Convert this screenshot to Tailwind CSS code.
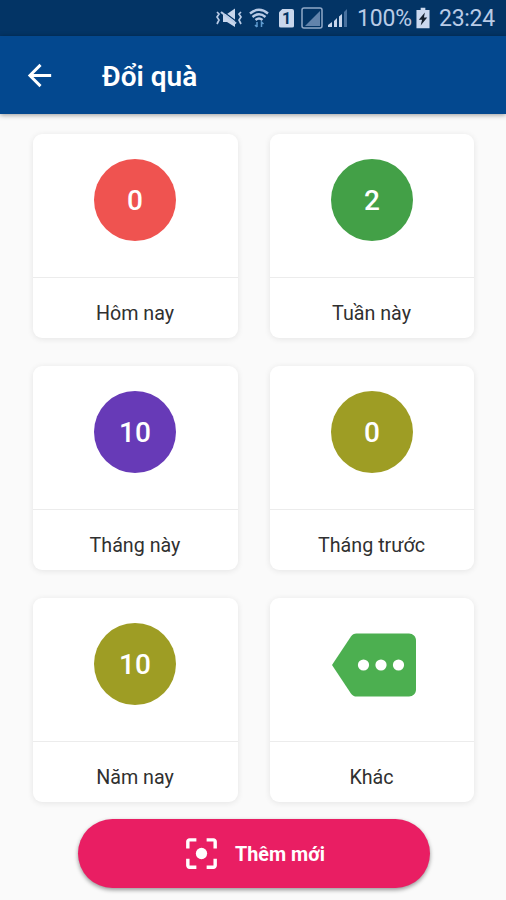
<!DOCTYPE html>
<html lang="vi">
<head>
<meta charset="utf-8">
<title>Đổi quà</title>
<script src="https://cdn.jsdelivr.net/npm/@tailwindcss/browser@4"></script>
</head>
<body class="flex h-[900px] w-[506px] flex-col overflow-hidden bg-[#fafafa] font-['Roboto',sans-serif]">
  <div class="flex h-9 shrink-0 items-center justify-end bg-[#033465] pr-3 text-[23px] text-[#b9cbe6]">
    <svg class="mr-1.5 h-5 w-7" viewBox="0 0 28 20" fill="none" stroke="#b9cbe6" stroke-width="1.700">
      <path d="M2 4l2 2-2 3 2 3-2 4M26 4l-2 2 2 3-2 3 2 4"/>
      <path d="M8 6h4l8-5.500v18.500l-8-5H8z" fill="#c8d6ec" stroke="none"/>
      <path d="M7.500 3l14 10.500" stroke="#033465" stroke-width="1.200"/>
      <path d="M6 4l15 11.500" stroke-width="2.200"/>
    </svg>
    <svg class="mr-2.5 h-5 w-5" viewBox="0 0 20 20" fill="none" stroke="#b9cbe6" stroke-width="2.400">
      <path d="M1 5.500Q10-2 19 5.500M3.500 9Q10 3.500 16.500 9M6.500 12Q10 9 13.500 12"/>
      <path d="M8 14v5M6 17l2 2M12.500 19v-5l2 2" stroke="#5f9bcf" stroke-width="1.500"/>
    </svg>
    <div class="mr-[7px] flex h-[19px] w-[15px] items-center justify-center rounded-[2px] bg-[#c8d6ec] pt-0.5 text-base font-bold text-[#033465] [clip-path:polygon(25%_0,100%_0,100%_100%,0_100%,0_20%)]">1</div>
    <svg class="mr-[5px] h-[22px] w-[22px]" viewBox="0 0 22 22">
      <path d="M4 19L19 4v15z" fill="#6283ab"/>
      <rect x="1" y="1" width="20" height="20" rx="2" fill="none" stroke="#91a9c8" stroke-width="1.500"/>
    </svg>
    <svg class="mr-[9px] h-5 w-5" viewBox="0 0 20 20" fill="#c8d6ec">
      <path d="M0 17l4-3v5H0zM6 13l3-3v9H6zM11 8.500l3-2.500V19h-3z"/>
      <path d="M16 4l3-3v18h-3z" fill="#48719f"/>
    </svg>
    <span class="mr-[5px] w-[54px] pt-0.5 tracking-[-0.2px] whitespace-nowrap">100%</span>
    <svg class="mr-[9px] h-[22px] w-[14px]" viewBox="0 0 15 22">
      <path d="M5 0h5v2.500h4.500V22H.5V2.500H5z" fill="#ccd9ef"/>
      <path d="M9.500 5L3 13h3.500L5 19l7-8.500H8.500z" fill="#14202e"/>
    </svg>
    <span class="w-[55px] pt-0.5 tracking-[-0.3px] whitespace-nowrap">23:24</span>
  </div>
  <header class="z-10 flex h-[78px] shrink-0 items-center bg-[#03488f] pl-[22px] text-white shadow-[0_1px_5px_rgba(0,0,0,0.4)]">
    <svg class="mr-[45px] h-[35px] w-[35px]" viewBox="0 0 24 24" fill="currentColor"><path d="M20 11H7.830l5.590-5.590L12 4l-8 8 8 8 1.410-1.410L7.830 13H20z"/></svg>
    <h1 class="pt-[3px] text-[28px] leading-8 font-semibold">Đổi quà</h1>
  </header>
  <main class="ml-[33px] mt-5 grid shrink-0 grid-cols-[205px_204px] grid-rows-[204px_204px_204px] gap-x-8 gap-y-7 text-[19.7px] text-[#303030]">
    <section class="flex flex-col rounded-[9px] bg-white shadow-[0_1px_6px_rgba(0,0,0,0.09)]">
      <div class="flex h-[144px] justify-center border-b border-[#ececec] pt-[24.5px] pr-px"><div class="flex size-[82px] items-center justify-center rounded-full bg-[#ef5350] pt-[3px] text-[28px] font-medium text-white">0</div></div>
      <p class="pt-[21px] pr-px text-center leading-[30px]">Hôm nay</p>
    </section>
    <section class="flex flex-col rounded-[9px] bg-white shadow-[0_1px_6px_rgba(0,0,0,0.09)]">
      <div class="flex h-[144px] justify-center border-b border-[#ececec] pt-[24.5px]"><div class="flex size-[82px] items-center justify-center rounded-full bg-[#43a047] pt-[3px] text-[28px] font-medium text-white">2</div></div>
      <p class="pt-[21px] pr-px text-center leading-[30px]">Tuần này</p>
    </section>
    <section class="flex flex-col rounded-[9px] bg-white shadow-[0_1px_6px_rgba(0,0,0,0.09)]">
      <div class="flex h-[144px] justify-center border-b border-[#ececec] pt-[24.5px] pr-px"><div class="flex size-[82px] items-center justify-center rounded-full bg-[#673ab7] pt-[3px] text-[28px] font-medium text-white">10</div></div>
      <p class="pt-[21px] pr-px text-center leading-[30px]">Tháng này</p>
    </section>
    <section class="flex flex-col rounded-[9px] bg-white shadow-[0_1px_6px_rgba(0,0,0,0.09)]">
      <div class="flex h-[144px] justify-center border-b border-[#ececec] pt-[24.5px]"><div class="flex size-[82px] items-center justify-center rounded-full bg-[#9e9d24] pt-[3px] text-[28px] font-medium text-white">0</div></div>
      <p class="pt-[21px] pr-px text-center leading-[30px]">Tháng trước</p>
    </section>
    <section class="flex flex-col rounded-[9px] bg-white shadow-[0_1px_6px_rgba(0,0,0,0.09)]">
      <div class="flex h-[144px] justify-center border-b border-[#ececec] pt-[24.5px] pr-px"><div class="flex size-[82px] items-center justify-center rounded-full bg-[#9e9d24] pt-[3px] text-[28px] font-medium text-white">10</div></div>
      <p class="pt-[21px] pr-px text-center leading-[30px]">Năm nay</p>
    </section>
    <section class="flex flex-col rounded-[9px] bg-white shadow-[0_1px_6px_rgba(0,0,0,0.09)]">
      <div class="flex h-[144px] justify-center border-b border-[#ececec] pt-[25px] pl-[3px]">
        <svg class="size-[84px]" viewBox="0 0 24 24"><path fill="#4caf50" d="M22 3H7c-.69 0-1.230.35-1.590.88L0 12l5.410 8.110c.36.53.97.89 1.660.89H22c1.100 0 2-.9 2-2V5c0-1.100-.9-2-2-2z"/><g fill="#fff"><circle cx="9" cy="12" r="1.600"/><circle cx="14" cy="12" r="1.600"/><circle cx="19" cy="12" r="1.600"/></g></svg>
      </div>
      <p class="pt-[21px] pr-px text-center leading-[30px]">Khác</p>
    </section>
  </main>
  <button class="ml-[78px] mt-[17px] flex h-[69px] w-[352px] shrink-0 items-center rounded-full bg-[#e91e63] pl-[103px] text-[19.8px] font-bold text-white shadow-[0_2px_4px_rgba(0,0,0,0.4)]">
    <svg class="mr-[13px] size-[41px]" viewBox="0 0 24 24" fill="currentColor"><circle cx="12" cy="12" r="3.300"/><path d="M5 15H3v4c0 1.100.9 2 2 2h4v-2H5zM5 5h4V3H5c-1.100 0-2 .9-2 2v4h2zM19 3h-4v2h4v4h2V5c0-1.100-.9-2-2-2zM19 19h-4v2h4c1.100 0 2-.9 2-2v-4h-2z"/></svg>
    <span class="pt-0.5">Thêm mới</span>
  </button>
</body>
</html>
